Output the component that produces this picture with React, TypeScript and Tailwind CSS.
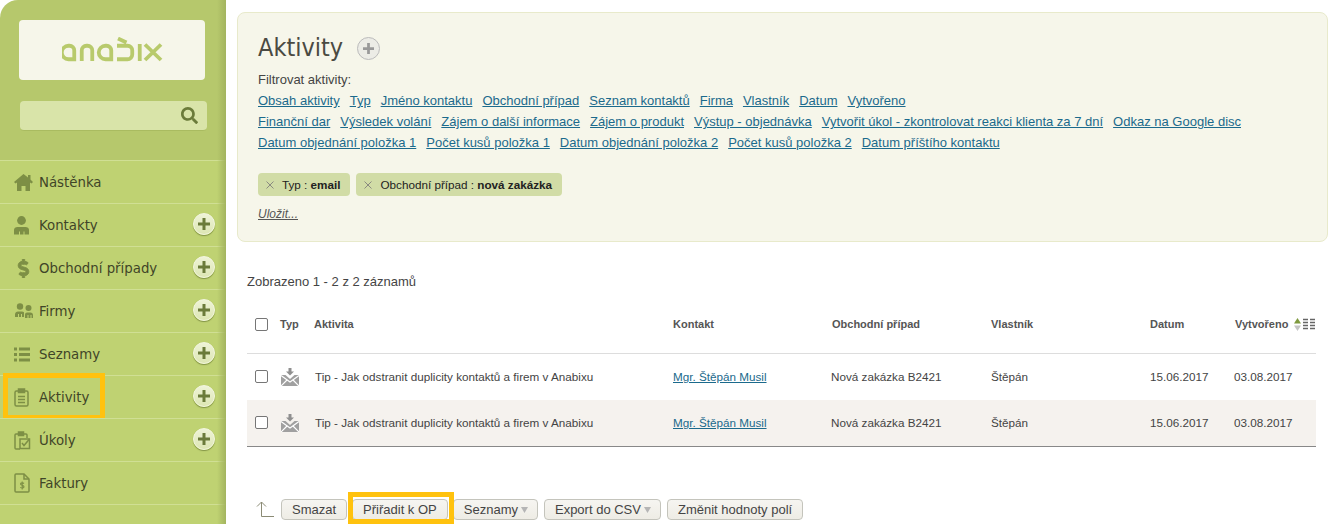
import { FaSearch, FaDollarSign } from "react-icons/fa";

const SANS = "font-['Liberation_Sans',Arial,sans-serif]";

const menu = [
    { label: "Nástěnka", icon: "home", plus: false },
    { label: "Kontakty", icon: "user", plus: true },
    { label: "Obchodní případy", icon: "dollar", plus: true },
    { label: "Firmy", icon: "users", plus: true },
    { label: "Seznamy", icon: "list", plus: true },
    { label: "Aktivity", icon: "clip", plus: true, marked: true },
    { label: "Úkoly", icon: "task", plus: true },
    { label: "Faktury", icon: "invoice", plus: false },
];

const filterRows = [
    ["Obsah aktivity", "Typ", "Jméno kontaktu", "Obchodní případ", "Seznam kontaktů", "Firma", "Vlastník", "Datum", "Vytvořeno"],
    ["Finanční dar", "Výsledek volání", "Zájem o další informace", "Zájem o produkt", "Výstup - objednávka", "Vytvořit úkol - zkontrolovat reakci klienta za 7 dní", "Odkaz na Google disc"],
    ["Datum objednání položka 1", "Počet kusů položka 1", "Datum objednání položka 2", "Počet kusů položka 2", "Datum příštího kontaktu"],
];

const gridCols = "grid grid-cols-[33px_34px_359px_159px_159px_159px_85px_82px]";

function MenuIcon({ name }: { name: string }) {
    const c = "#7d8f45";
    if (name === "home")
        return (
            <svg width="19" height="17" viewBox="0 0 19 17" fill={c}>
                <path d="M9.500 0L14 3.500V1h2.500v4.500L19 8l-1.500 1.500L16 8.500V17h-4.500v-5h-4v5H3V8.500L1.500 9.500 0 8z" />
            </svg>
        );
    if (name === "dollar") return <FaDollarSign size={19} color={c} stroke={c} strokeWidth={24} />;
    if (name === "list")
        return (
            <svg width="16" height="15" viewBox="0 0 16 15" fill={c}>
                <rect x="0" y="0.500" width="3" height="3" />
                <rect x="5" y="0.500" width="11" height="3" />
                <rect x="0" y="6" width="3" height="3" />
                <rect x="5" y="6" width="11" height="3" />
                <rect x="0" y="11.500" width="3" height="3" />
                <rect x="5" y="11.500" width="11" height="3" />
            </svg>
        );
    if (name === "user")
        return (
            <svg width="15" height="19" viewBox="0 0 15 19" fill={c}>
                <circle cx="7.500" cy="4.500" r="4.400" />
                <path d="M0 18.500v-4.500c0-2 1.500-3 3.500-3h8c2 0 3.500 1 3.500 3v4.500h-4.500v-3h-1v3H6v-3H5v3z" />
            </svg>
        );
    if (name === "users")
        return (
            <svg width="20" height="16" viewBox="0 0 20 16" fill={c}>
                <circle cx="6" cy="3.500" r="3.200" />
                <circle cx="14.500" cy="5" r="3" />
                <path d="M1 14v-2.500C1 9.500 2.500 8.500 4 8.500h4c.8 0 1.500.3 2 .8V14H8v-3H7v3H5v-3H4v3zM11 15v-3.500c0-1.200 1-2 2-2h3.500c1.500 0 2.500 1 2.500 2.500v3h-1.500v-3h-1v3h-2v-3h-1v3z" />
            </svg>
        );
    if (name === "clip")
        return (
            <svg width="15" height="19" viewBox="0 0 15 19" fill="none" stroke={c} strokeWidth="1.500">
                <rect x="1" y="3" width="13" height="15" rx="1.500" />
                <rect x="4.500" y="1" width="6" height="3.500" fill={c} />
                <path d="M4 8.500h7M4 11.500h7M4 14.500h7" />
            </svg>
        );
    if (name === "task")
        return (
            <svg width="17" height="19" viewBox="0 0 17 19" fill="none" stroke={c} strokeWidth="1.500">
                <path d="M6 18H2a1 1 0 0 1-1-1V4a1 1 0 0 1 1-1h10a1 1 0 0 1 1 1v3" />
                <rect x="4.500" y="1" width="5" height="3.500" fill={c} />
                <rect x="6" y="8" width="9.500" height="9.500" />
                <path d="M8 12l2 2.500L15.500 8" />
            </svg>
        );
    return (
        <svg width="16" height="20" viewBox="0 0 16 20" fill="none" stroke={c} strokeWidth="1.500">
            <path d="M2 1h8l5 5v12a1 1 0 0 1-1 1H2a1 1 0 0 1-1-1V2a1 1 0 0 1 1-1z" />
            <path d="M10 1v5h5" />
            <path d="M10 10.500c-1-1-3.500-.8-3.500.6 0 1.600 3.500 1 3.500 2.700 0 1.400-2.500 1.500-3.700.5M8.200 8.500v8" strokeWidth="1.100" />
        </svg>
    );
}

function PlusButton() {
    return (
        <div className="w-[22px] h-[22px] rounded-full bg-gradient-to-b from-[#eef3d6] to-[#dde6b4] border border-[#f3f6e0] shadow-[0_1px_1px_rgba(90,105,40,0.6)] flex items-center justify-center">
            <svg width="12" height="12" viewBox="0 0 12 12" fill="#6b7b3a">
                <path d="M4.500 0h3v4.500H12v3H7.500V12h-3V7.500H0v-3h4.500z" />
            </svg>
        </div>
    );
}

function Logo() {
    return (
        <svg width="101" height="25" viewBox="0 0 101 25" fill="none" stroke="#b8ca6c" strokeWidth="3.800" role="img" aria-label="anabix">
            <path d="M12.250 22.250H6.500a4.750 4.750 0 0 1 0-13.500h1a4.750 4.750 0 0 1 4.750 4.750z" />
            <path d="M19.750 24V13.500a4.750 4.750 0 0 1 4.750-4.750h1a4.750 4.750 0 0 1 4.750 4.750V24" />
            <path d="M49.250 22.250H43.500a4.750 4.750 0 0 1 0-13.500h1a4.750 4.750 0 0 1 4.750 4.750z" />
            <path d="M55 8.750h10.500a4.750 4.750 0 0 1 4.750 4.750v4a4.750 4.750 0 0 1-4.750 4.750H55M56 1.500l8.500 4" />
            <path d="M77.750 7v17" />
            <path d="M83 7.500l16 15.500M99 7.500L83 23" />
        </svg>
    );
}

function InboxIcon() {
    return (
        <svg width="18" height="18" viewBox="0 0 18 18">
            <path d="M7.500 0h3v3.500H13L9 7.500l-4-4h2.500z" fill="#8f8f8f" />
            <path d="M0 7h4.500L9 11l4.500-4H18v11H0z" fill="#a0a0a0" />
            <path d="M0 7.500l9 6.500 9-6.500M0 18l6.500-6.500M18 18l-6.500-6.500" fill="none" stroke="#fff" strokeWidth="1.200" />
        </svg>
    );
}

function Checkbox() {
    return <span className="block w-[13px] h-[13px] border border-[#767676] rounded-[2px] bg-white" />;
}

function ActionButton({ label, caret, className = "" }: { label: string; caret?: boolean; className?: string }) {
    return (
        <button className={`h-[21px] flex items-center rounded-[4px] border border-[#c4c4bc] bg-gradient-to-b from-[#f6f5f1] to-[#eeece5] text-[13px] leading-none text-[#444] ${caret ? "pl-[10px] pr-[9px] gap-[3px]" : "px-[10px]"} ${className}`}>
            {label}
            {caret && (
                <svg width="7" height="6" viewBox="0 0 7 6" fill="#b5b5b5">
                    <path d="M0 0h7L3.500 6z" />
                </svg>
            )}
        </button>
    );
}

function Row({ shaded }: { shaded?: boolean }) {
    return (
        <div className={`${gridCols} h-[46px] items-center text-[11.7px] text-[#444] ${shaded ? "bg-[#f5f2ee]" : ""}`}>
            <div className="pl-[8px] pb-[2px]">
                <Checkbox />
            </div>
            <div className="pl-[1px]">
                <InboxIcon />
            </div>
            <div className="pl-[1px]">Tip - Jak odstranit duplicity kontaktů a firem v Anabixu</div>
            <div className="text-[#1b6a8c] underline">Mgr. Štěpán Musil</div>
            <div className="-ml-px">Nová zakázka B2421</div>
            <div>Štěpán</div>
            <div>15.06.2017</div>
            <div className="-ml-px">03.08.2017</div>
        </div>
    );
}

export default function App() {
    return (
        <div className={`h-[524px] w-[1329px] overflow-hidden bg-white flex ${SANS}`}>
            <aside className="w-[226px] shrink-0 h-full bg-[#b6c86c] rounded-tl-[18px] relative">
                <div className="pt-[20px] pl-[19px]">
                    <div className="w-[186px] h-[60px] bg-[#f6f6ea] rounded-[4px] flex items-center justify-center pb-[2px]">
                        <Logo />
                    </div>
                    <div className="mt-[21px] ml-px w-[187px] h-[30px] bg-[#d9e4a9] rounded-[4px] border-b border-[#a9bb60] flex items-center justify-end pr-[9px]">
                        <FaSearch size={17} color="#6b7b3a" />
                    </div>
                </div>
                <nav className="mt-[29px]">
                    {menu.map((item) => (
                        <div key={item.label} className="relative h-[43px] bg-[#bfd272] border-t border-[#d0df94] flex items-center">
                            <div className="w-[39px] pl-[14px] flex justify-start shrink-0">
                                <MenuIcon name={item.icon} />
                            </div>
                            <span className="flex-1 font-['DejaVu_Sans_Condensed','DejaVu_Sans',sans-serif] text-[14.8px] text-[#3f4528]">{item.label}</span>
                            {item.plus && (
                                <div className="mr-[11px] mb-[2px]">
                                    <PlusButton />
                                </div>
                            )}
                            {item.marked && <div className="absolute left-[3px] top-[-3px] w-[102px] h-[47px] border-[5px] border-[#ffc20e]" />}
                        </div>
                    ))}
                    <div className="h-[21px] bg-[#bfd272] border-t border-[#d0df94]" />
                </nav>
                <div className="absolute right-0 top-0 bottom-0 w-[9px] bg-gradient-to-r from-transparent to-[#a3b45f]" />
            </aside>

            <main className="flex-1 pl-[11px] pt-[12px]">
                <section className="w-[1091px] h-[230px] bg-[#f6f6ea] border border-[#e8eacb] rounded-[8px] pl-[20px] pt-[20px]">
                    <div className="flex items-center gap-[14px]">
                        <h1 className="font-['DejaVu_Sans_Condensed','DejaVu_Sans',sans-serif] text-[25px] leading-[30px] text-[#4a4a42]">Aktivity</h1>
                        <div className="w-[23px] h-[23px] rounded-full bg-[#ecece6] border border-[#bbb] flex items-center justify-center">
                            <svg width="11" height="11" viewBox="0 0 12 12" fill="#999">
                                <path d="M4.500 0h3v4.500H12v3H7.500V12h-3V7.500H0v-3h4.500z" />
                            </svg>
                        </div>
                    </div>
                    <p className="mt-[6px] text-[13px] leading-[21px] text-[#444]">Filtrovat aktivity:</p>
                    <div className="text-[13px] leading-[21px]">
                        {filterRows.map((row, i) => (
                            <div key={i} className="flex gap-[10px]">
                                {row.map((f) => (
                                    <a key={f} className="text-[#1b6a8c] underline">
                                        {f}
                                    </a>
                                ))}
                            </div>
                        ))}
                    </div>
                    <div className="mt-[20px] flex gap-[6px]">
                        {[
                            ["Typ :", "email"],
                            ["Obchodní případ :", "nová zakázka"],
                        ].map(([name, value]) => (
                            <span key={name} className="h-[23px] pl-[8px] pr-[10px] bg-[#d1dca6] rounded-[4px] flex items-center text-[11.7px] text-[#222]">
                                <svg width="8" height="8" viewBox="0 0 8 8" stroke="#8a8a80" className="mr-[8px]">
                                    <path d="M.5.500l7 7M7.500.500l-7 7" />
                                </svg>
                                {name}&nbsp;<b>{value}</b>
                            </span>
                        ))}
                    </div>
                    <a className="block mt-[9px] text-[12px] italic underline text-[#555]">Uložit...</a>
                </section>

                <p className="mt-[31px] ml-[10px] text-[13px] leading-[18px] text-[#444]">Zobrazeno 1 - 2 z 2 záznamů</p>

                <div className="ml-[10px] w-[1069px] mt-[15px]">
                    <div className={`${gridCols} h-[48px] pb-[10px] items-center text-[11px] font-bold text-[#555] border-b border-[#ddd]`}>
                        <div className="pl-[8px]">
                            <Checkbox />
                        </div>
                        <div>Typ</div>
                        <div>Aktivita</div>
                        <div>Kontakt</div>
                        <div>Obchodní případ</div>
                        <div>Vlastník</div>
                        <div>Datum</div>
                        <div className="flex items-center gap-[6px]">
                            Vytvořeno
                            <svg width="21" height="14" viewBox="0 0 21 14">
                                <path d="M3.500 0L7 5.500H0z" fill="#7f9a3f" />
                                <path d="M3.500 13L0 7.500h7z" fill="#c4c4c4" />
                                <path d="M9 1.500h5M16 1.500h5M9 4.500h5M16 4.500h5M9 7.500h5M16 7.500h5M9 10.500h5M16 10.500h5" stroke="#666" strokeWidth="1.500" />
                            </svg>
                        </div>
                    </div>
                    <Row />
                    <Row shaded />
                    <div className="border-t border-[#888]" />
                </div>

                <div className="ml-[18px] mt-[52px] flex items-center gap-[7px]">
                    <svg width="19" height="18" viewBox="0 0 19 18" fill="none" stroke="#8b8b75">
                        <path d="M19 15.500H6.500V1M2 5.500L6.500 1 11 5.500" />
                    </svg>
                    <ActionButton label="Smazat" />
                    <div className="relative -ml-[2px]">
                        <ActionButton label="Přiřadit k OP" />
                        <div className="absolute left-[-4px] right-[-6px] top-[-7px] bottom-[-4px] border-[5px] border-[#ffc20e]" />
                    </div>
                    <ActionButton label="Seznamy" caret className="-ml-[2px]" />
                    <ActionButton label="Export do CSV" caret className="-ml-[1px]" />
                    <ActionButton label="Změnit hodnoty polí" className="-ml-[1px]" />
                </div>
            </main>
        </div>
    );
}
